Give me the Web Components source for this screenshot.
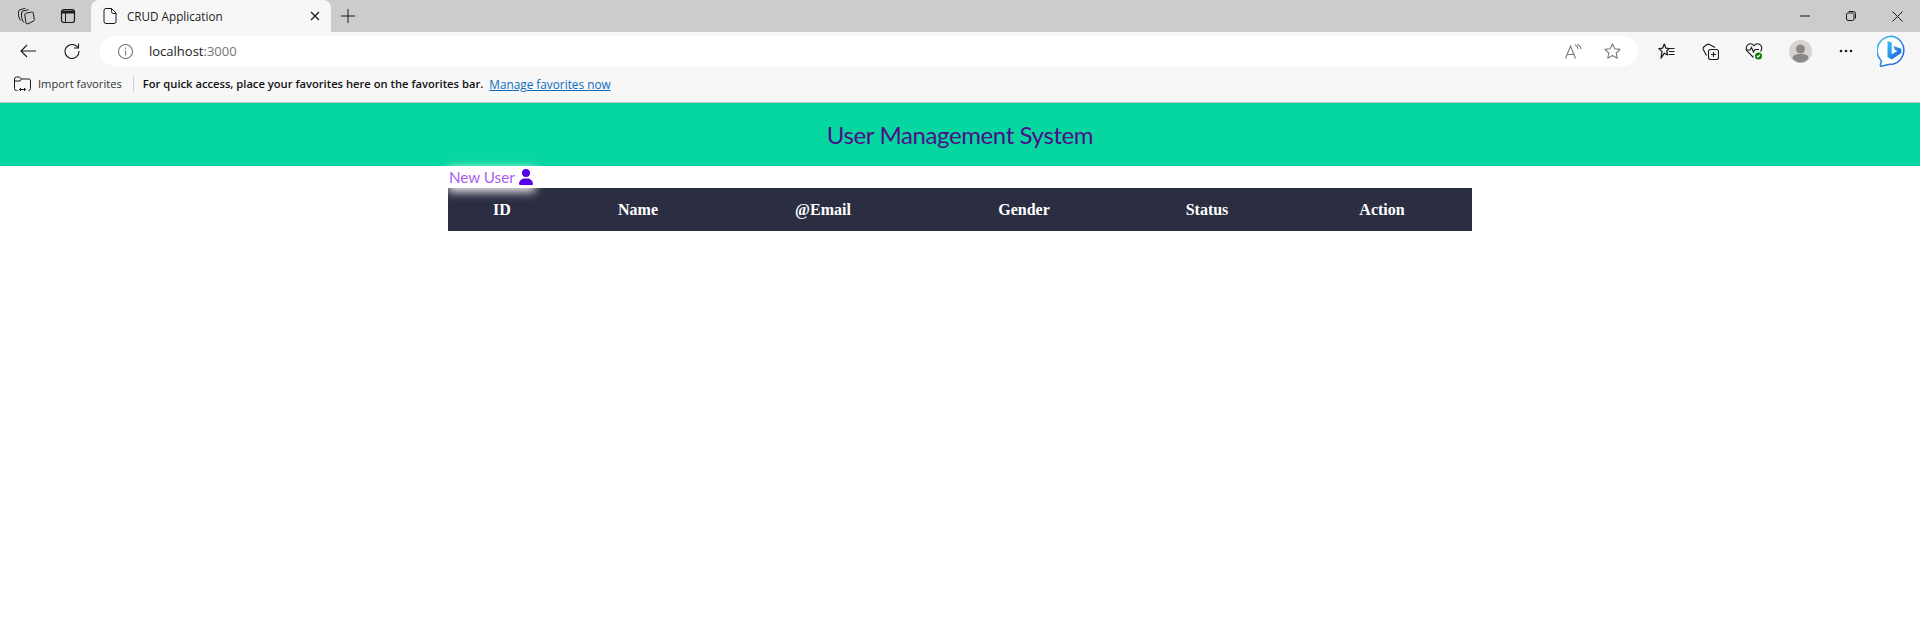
<!DOCTYPE html>
<html lang="en">
<head>
<meta charset="utf-8">
<title>CRUD Application</title>
<style>
    html, body { margin: 0; background: #fff; }
    body { font-family: "Open Sans", "Liberation Sans", sans-serif; }
</style>
</head>
<body>
<browser-frame>
    <tab-strip title-text="CRUD Application"></tab-strip>
    <address-bar url-host="localhost" url-port=":3000"></address-bar>
    <favorites-bar></favorites-bar>
</browser-frame>
<app-header>User Management System</app-header>
<page-body>
    <new-user-link>New User</new-user-link>
    <user-table columns="ID,Name,@Email,Gender,Status,Action"></user-table>
</page-body>

<script>
/* browser chrome wrapper, bottom hairline sits under the favorites bar */
class BrowserFrame extends HTMLElement {
    constructor() {
        super();
        this.attachShadow({ mode: "open" });
        this.shadowRoot.innerHTML = `
            <style>
                :host { display: block; border-bottom: 1px solid #c6c6c6; }
            </style>
            <slot></slot>
        `;
    }
}

class TabStrip extends HTMLElement {
    constructor() {
        super();
        this.attachShadow({ mode: "open" });
    }

    connectedCallback() {
        const title = this.getAttribute("title-text") || "";
        this.shadowRoot.innerHTML = `
            <style>
                :host {
                    display: flex;
                    height: 32px;
                    background: #ccc;
                    color: #1b1b1b;
                    font: 11.7px "Open Sans", "Liberation Sans", sans-serif;
                }
                svg { display: block; fill: none; stroke: #1a1a1a; stroke-width: 1; }
                .btn { width: 42px; display: flex; align-items: center; justify-content: center; }
                .first { margin-left: 5px; }
                .tab {
                    width: 240px;
                    margin-left: 2px;
                    background: #f7f7f7;
                    border-radius: 8px 8px 0 0;
                    display: flex;
                    align-items: center;
                    padding: 0 11px 0 12px;
                    box-sizing: border-box;
                }
                .tab .name { flex: 1; padding-left: 10px; white-space: nowrap; }
                .plus { margin-left: -4px; }
                .spacer { flex: 1; }
                .win { width: 46px; display: flex; align-items: center; justify-content: center; }
            </style>
            <div class="btn first">
                <svg width="18" height="18" viewBox="0 0 18 18">
                    <path d="M8.700 6.300 14.500 5a1.500 1.500 0 0 1 1.800 1.200l1 6.300a1.500 1.500 0 0 1-.9 1.600l-5.400 2.700a1.500 1.500 0 0 1-2-.8L7.800 8a1.500 1.500 0 0 1 .9-1.700z"/>
                    <path d="M7 15.500C5.200 13.800 4.500 11 4.500 8V6a2 2 0 0 1 1.500-2l5.500-1.300"/>
                    <path d="M3.800 13.500C2 11.500 1.500 9 1.500 6.500V4.800a2 2 0 0 1 1.500-2L8.300 1.300"/>
                </svg>
            </div>
            <div class="btn">
                <svg width="16" height="16" viewBox="0 0 16 16">
                    <rect x="1.500" y="1.500" width="13" height="13" rx="2.500" stroke-width="1.200"/>
                    <path d="M1.500 4h13" stroke-width="3"/>
                    <path d="M5.500 5v9.500"/>
                </svg>
            </div>
            <div class="tab">
                <svg width="14" height="16" viewBox="0 0 14 16">
                    <path d="M3 .5h5.500l4.500 4.500v8.500a2 2 0 0 1-2 2h-8a2 2 0 0 1-2-2v-11a2 2 0 0 1 2-2z"/>
                    <path d="M8.500 .5v3a2 2 0 0 0 2 2h2.500"/>
                </svg>
                <span class="name">${title}</span>
                <svg width="10" height="10" viewBox="0 0 10 10" style="stroke-width:1.200"><path d="M1 1l8 8M9 1l-8 8"/></svg>
            </div>
            <div class="btn plus">
                <svg width="14" height="14" viewBox="0 0 14 14"><path d="M7 0v14M0 7h14"/></svg>
            </div>
            <div class="spacer"></div>
            <div class="win"><svg width="10" height="2" viewBox="0 0 10 2"><path d="M0 1h10"/></svg></div>
            <div class="win">
                <svg width="10" height="10" viewBox="0 0 10 10"><rect x=".5" y="2" width="7.500" height="7.500" rx="1.500"/><path d="M2.500 .5h5a2 2 0 0 1 2 2v5"/></svg>
            </div>
            <div class="win"><svg width="11" height="11" viewBox="0 0 11 11"><path d="M.5 .5l10 10M10.500 .5l-10 10"/></svg></div>
        `;
    }
}

class AddressBar extends HTMLElement {
    constructor() {
        super();
        this.attachShadow({ mode: "open" });
    }

    connectedCallback() {
        const host = this.getAttribute("url-host");
        const port = this.getAttribute("url-port");
        this.shadowRoot.innerHTML = `
            <style>
                :host {
                    display: flex;
                    align-items: center;
                    height: 38px;
                    background: #f7f7f7;
                    padding: 0 0 0 6px;
                    box-sizing: border-box;
                }
                svg { display: block; fill: none; stroke: #1a1a1a; stroke-width: 1.100; }
                .nav { width: 44px; flex: none; display: flex; justify-content: center; }
                .omni {
                    flex: none;
                    width: 1538px;
                    height: 30px;
                    margin: 0 0 0 6px;
                    background: #fff;
                    border-radius: 15px;
                    display: flex;
                    align-items: center;
                    padding: 0 0 0 18px;
                    box-sizing: border-box;
                    font-size: 13px;
                    color: #1b1b1b;
                }
                .omni .url { margin-left: 16px; flex: 1; }
                .omni .url span { color: #767676; }
                .omni svg { stroke: #7a7a7a; }
                .read { margin-right: 22px; }
                .star { margin-right: 17px; }
                .tools { display: flex; align-items: center; flex: none; margin-left: 6px; }
                .tool { width: 44px; display: flex; justify-content: center; }
            </style>
            <div class="nav">
                <svg width="16" height="14" viewBox="0 0 16 14"><path d="M16 7H1M7 1 1 7l6 6"/></svg>
            </div>
            <div class="nav">
                <svg width="16" height="16" viewBox="0 0 16 16"><path d="M13.800 4.500A7 7 0 1 0 15 8"/><path d="M14.500 .5v4.500h-4.500"/></svg>
            </div>
            <div class="omni">
                <svg width="15" height="15" viewBox="0 0 15 15">
                    <circle cx="7.500" cy="7.500" r="7"/>
                    <path d="M7.500 6.500v5M7.500 3.500v1.500"/>
                </svg>
                <div class="url">${host}<span>${port}</span></div>
                <svg class="read" width="17" height="15" viewBox="0 0 17 15">
                    <path d="M.5 14.500 5.500 2l5 12.500M2.200 10.500h6.600"/>
                    <path d="M10 .8c1.700.8 2.800 2.200 3.200 4M12.500 .3c1.800 1 3.200 2.800 3.700 4.700"/>
                </svg>
                <svg class="star" width="17" height="16" viewBox="0 0 17 16">
                    <path d="M8.500 .9l2.300 4.800 5.300.7-3.900 3.600 1 5.200-4.700-2.600-4.700 2.600 1-5.200-3.900-3.600 5.300-.7z" stroke-linejoin="round"/>
                </svg>
            </div>
            <div class="tools">
                <div class="tool">
                    <svg width="17" height="17" viewBox="0 0 17 17">
                        <path d="M6.300 1l1.600 4.200 3.400.3-2.600 2.500 1 4-3.300-1.800-3.400 5 1-6.800L.9 5.700l3.700-.5z" stroke-linejoin="round" stroke-width="1.200"/>
                        <path d="M10.500 5.500h6M11 8.500h5.500M11 11.500h5.500"/>
                    </svg>
                </div>
                <div class="tool">
                    <svg width="17" height="17" viewBox="0 0 17 17">
                        <rect x="6.500" y="6.500" width="10" height="10" rx="2"/>
                        <path d="M11.500 9v5M9 11.500h5"/>
                        <path d="M4.500 12.500 1.300 6.500a2.500 2.500 0 0 1 1-3l2.700-2a2.500 2.500 0 0 1 2.500 0l5.500 3"/>
                    </svg>
                </div>
                <div class="tool">
                    <svg width="18" height="18" viewBox="0 0 18 18">
                        <path d="M8.500 15.500 2.500 9.500C.5 7 1 3.500 3.500 2.300c2-1 4.200-.3 5.500 1.500 1.300-1.800 3.500-2.500 5.500-1.500C17 3.500 17.500 7 15.500 9.500"/>
                        <path d="M.8 8h4.200l1.500-2.500 2 4.500 1.500-2.500h4"/>
                        <circle cx="13.500" cy="14" r="3.500" fill="#107c10" stroke="none"/>
                        <path d="M12 14l1 1 2-2" stroke="#fff"/>
                    </svg>
                </div>
                <div class="tool" style="margin-left:2px">
                    <svg width="23" height="23" viewBox="0 0 23 23" style="stroke:none">
                        <circle cx="11.500" cy="11.500" r="11.500" fill="#d6d3d1"/>
                        <circle cx="11.500" cy="9" r="4.500" fill="#8a8886"/>
                        <path d="M3.500 18.500c0-3.500 3-4.500 8-4.500s8 1 8 4.500c-2 2.500-5 4-8 4s-6-1.500-8-4z" fill="#8a8886"/>
                    </svg>
                </div>
                <div class="tool" style="margin-left:2px">
                    <svg width="14" height="4" viewBox="0 0 14 4" style="stroke:none;fill:#1a1a1a">
                        <circle cx="2" cy="2" r="1.300"/><circle cx="7" cy="2" r="1.300"/><circle cx="12" cy="2" r="1.300"/>
                    </svg>
                </div>
                <div class="tool" style="width:50px">
                    <svg width="32" height="32" viewBox="0 0 32 32" style="stroke:none">
                        <defs>
                            <linearGradient id="bingb" x1="0" y1="0" x2="1" y2="1">
                                <stop offset="0" stop-color="#38c6f4"/>
                                <stop offset="1" stop-color="#1a56d8"/>
                            </linearGradient>
                        </defs>
                        <path d="M16.500 1.500a14.300 14.300 0 0 1 0 27.500c-3 0-6.500.5-11 2-2 .5-2.500-.5-2-1.500.5-1.300 1-2.700.5-4A14.300 14.300 0 0 1 16.500 1.500z" fill="#fff" stroke="url(#bingb)" stroke-width="1.600"/>
                        <path d="M10.500 6l4.200 1.500v11.800l5.800-3.300-2.700-1.300-1.500-3.700 8 2.800v4.200L14.700 24.500l-4.200-2.400z" fill="url(#bingb)"/>
                    </svg>
                </div>
            </div>
        `;
    }
}

class FavoritesBar extends HTMLElement {
    constructor() {
        super();
        this.attachShadow({ mode: "open" });
        this.shadowRoot.innerHTML = `
            <style>
                :host {
                    display: flex;
                    align-items: center;
                    height: 32px;
                    background: #f7f7f7;
                    padding: 0 0 5px 14px;
                    box-sizing: border-box;
                    font: 11.2px "Open Sans", "Liberation Sans", sans-serif;
                    color: #1b1b1b;
                    white-space: nowrap;
                }
                svg { display: block; fill: none; stroke: #1a1a1a; stroke-width: 1; }
                .imp { margin-left: 7px; color: #333; }
                .sep { width: 1px; height: 16px; background: #cfcfcf; margin: 0 9px 0 11px; }
                .tip { font-weight: 600; color: #111; }
                a { margin-left: 6px; color: #0f6cbd; text-decoration: underline; font-size: 11.8px; }
            </style>
            <svg width="17" height="16" viewBox="0 0 17 16">
                <path d="M3.500 14.500H2.500a2 2 0 0 1-2-2V3a2 2 0 0 1 2-2h3l2 2h7a2 2 0 0 1 2 2v7.500a2 2 0 0 1-2 2"/>
                <path d="M.5 5h5.500l1.500-2"/>
                <path d="M5.500 13.500h6M7 12l-1.500 1.500L7 15M10 12l1.500 1.500L10 15"/>
            </svg>
            <span class="imp">Import favorites</span>
            <span class="sep"></span>
            <span class="tip">For quick access, place your favorites here on the favorites bar.</span>
            <a>Manage favorites now</a>
        `;
    }
}

class AppHeader extends HTMLElement {
    constructor() {
        super();
        this.attachShadow({ mode: "open" });
        this.shadowRoot.innerHTML = `
            <style>
                :host {
                    display: flex;
                    align-items: center;
                    justify-content: center;
                    height: 63px;
                    padding-bottom: 1px;
                    box-sizing: border-box;
                    background: #06d6a0;
                    color: #4b1088;
                    font: 24px "Lato", "Liberation Sans", sans-serif;
                    letter-spacing: -.39px;
                }
            </style>
            <slot></slot>
        `;
    }
}

class PageBody extends HTMLElement {
    constructor() {
        super();
        this.attachShadow({ mode: "open" });
        this.shadowRoot.innerHTML = `
            <style>
                :host { display: block; width: 1024px; margin: 0 auto; }
            </style>
            <slot></slot>
        `;
    }
}

class NewUserLink extends HTMLElement {
    constructor() {
        super();
        this.attachShadow({ mode: "open" });
        this.shadowRoot.innerHTML = `
            <style>
                :host {
                    display: flex;
                    width: fit-content;
                    align-items: center;
                    height: 22px;
                    margin-left: 1px;
                    padding-right: 1px;
                    gap: 4px;
                    position: relative;
                    z-index: 1;
                    background: #fff;
                    box-shadow: 0 3px 10px 1px rgba(255, 255, 255, .9);
                    color: #a860f2;
                    font: 15.2px "Lato", "Liberation Sans", sans-serif;
                }
                svg { display: block; fill: #5500e6; }
            </style>
            <slot></slot>
            <svg width="14" height="16" viewBox="0 0 448 512">
                <path d="M224 256a128 128 0 1 0 0-256 128 128 0 1 0 0 256zm-45.700 48C79.800 304 0 383.800 0 482.300 0 498.700 13.300 512 29.700 512h388.600c16.400 0 29.700-13.300 29.700-29.700 0-98.500-79.800-178.300-178.300-178.300h-91.400z"/>
            </svg>
        `;
    }
}

class UserTable extends HTMLElement {
    constructor() {
        super();
        this.attachShadow({ mode: "open" });
    }

    connectedCallback() {
        const cols = (this.getAttribute("columns") || "").split(",");
        this.shadowRoot.innerHTML = `
            <style>
                :host {
                    display: grid;
                    grid-template-columns: 108px 164px 206px 196px 170px 180px;
                    height: 43px;
                    align-items: center;
                    background: #2b2d42;
                    color: #fff;
                    font: bold 16px "Liberation Serif", "Times New Roman", serif;
                    text-align: center;
                }
            </style>
            ${cols.map(c => `<div>${c}</div>`).join("")}
        `;
    }
}

customElements.define("browser-frame", BrowserFrame);
customElements.define("tab-strip", TabStrip);
customElements.define("address-bar", AddressBar);
customElements.define("favorites-bar", FavoritesBar);
customElements.define("app-header", AppHeader);
customElements.define("page-body", PageBody);
customElements.define("new-user-link", NewUserLink);
customElements.define("user-table", UserTable);
</script>
</body>
</html>
